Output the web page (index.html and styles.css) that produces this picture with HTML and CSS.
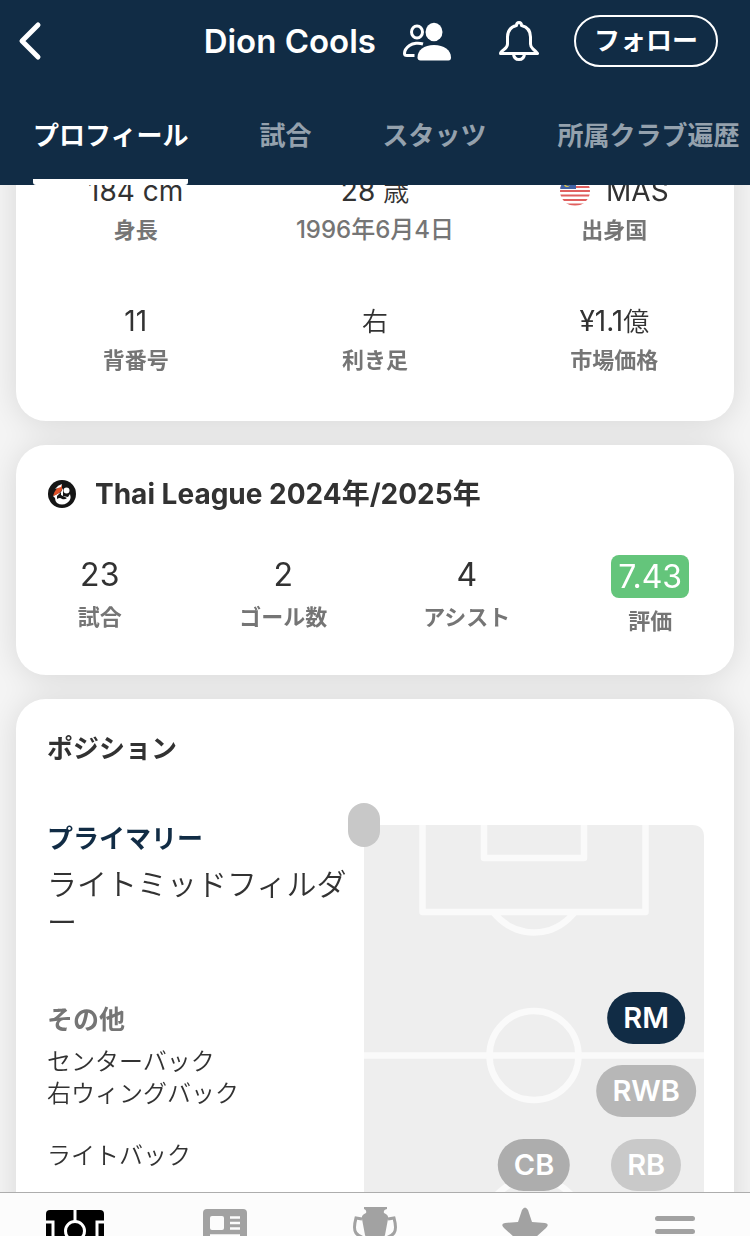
FILE: index.html
```html
<!DOCTYPE html>
<html lang="ja">
<head>
    <meta charset="UTF-8">
    <meta name="viewport" content="width=device-width, initial-scale=1.0">
    <title>Dion Cools</title>
    <link rel="stylesheet" href="styles.css">
</head>
<body>
    <header class="header">
        <div class="title-bar">
            <button type="button" class="icon-button back" aria-label="戻る">
                <svg width="24" height="40" viewBox="0 0 24 40"><path d="M20 4 4 20 20 36" fill="none" stroke="#fff" stroke-width="5" stroke-linecap="round" stroke-linejoin="round"/></svg>
            </button>
            <h1>Dion Cools</h1>
            <button type="button" class="icon-button compare" aria-label="比較">
                <svg width="48" height="40" viewBox="0 0 48 40">
                    <g fill="none" stroke="#fff" stroke-width="3">
                        <ellipse cx="14" cy="11" rx="5.5" ry="6"/>
                        <path d="M20 23C16 21.7 10 22 6.500 24.500C3 27 1.500 30 1.500 32.500Q1.500 34.500 4 34.500H11.500"/>
                    </g>
                    <ellipse cx="31" cy="11" rx="8.500" ry="9.200" fill="#fff"/>
                    <path d="M14.500 36.500C14.500 29 21 24 31 24S48 29 48 36.500Q48 39.500 45.500 39.500H17.500Q14.500 39.500 14.500 36.500Z" fill="#fff"/>
                </svg>
            </button>
            <button type="button" class="icon-button bell" aria-label="通知">
                <svg width="40" height="40" viewBox="0 0 40 40">
                    <g fill="none" stroke="#fff" stroke-width="3" stroke-linejoin="round">
                        <path d="M17.500 4.500Q17.500 1.500 20 1.500T22.500 4.500C28.500 6 31.500 10 31.500 16V23Q31.500 26 34 28T38.500 32.500H1.500Q1.500 31 5 28.500T8.500 23V16C8.500 10 11.500 6 17.500 4.500Z"/>
                        <path d="M14.500 33Q15 38.500 20 38.500T25.500 33"/>
                    </g>
                </svg>
            </button>
            <button type="button" class="follow">フォロー</button>
        </div>
        <nav class="tabs">
            <a href="#profile" class="active">プロフィール</a>
            <a href="#matches">試合</a>
            <a href="#stats">スタッツ</a>
            <a href="#career">所属クラブ遍歴</a>
        </nav>
    </header>

    <main class="content">
        <div class="cards">
            <section class="card info">
                <div class="stat">
                    <div class="value">184 cm</div>
                    <div class="label">身長</div>
                </div>
                <div class="stat">
                    <div class="value">28 <span class="unit">歳</span></div>
                    <div class="label date">1996年6月4日</div>
                </div>
                <div class="stat">
                    <div class="value country">
                        <svg width="30" height="30" viewBox="0 0 30 30">
                            <clipPath id="flag"><circle cx="15" cy="15" r="15"/></clipPath>
                            <g clip-path="url(#flag)">
                                <path fill="#fff" d="M0 0h30v30H0z"/>
                                <path stroke="#e0605f" stroke-width="2" d="M0 3h30M0 7h30M0 11h30M0 15h30M0 19.500h30M0 24h30M0 28.500h30"/>
                                <path fill="#4263a5" d="M0 0h16v13H0z"/>
                                <circle cx="7" cy="8" r="3" fill="#e9cf48"/>
                                <circle cx="8" cy="7" r="3" fill="#4263a5"/>
                            </g>
                        </svg>
                        MAS
                    </div>
                    <div class="label">出身国</div>
                </div>
                <div class="stat">
                    <div class="value">11</div>
                    <div class="label">背番号</div>
                </div>
                <div class="stat">
                    <div class="value"><span class="unit">右</span></div>
                    <div class="label">利き足</div>
                </div>
                <div class="stat">
                    <div class="value">¥1.1<span class="unit">億</span></div>
                    <div class="label">市場価格</div>
                </div>
            </section>

            <section class="card league">
                <h2>
                    <svg width="28" height="28" viewBox="0 0 28 28">
                        <circle cx="14" cy="14" r="14" fill="#151515"/>
                        <path d="M5 16L13 12L15 8V16L20 17L22 14Q24 20 19 23Q14 26 9 23Q7 21 7 18Z" fill="#fff"/>
                        <path d="M9 16L13 12V15L19 18Q17 20 14 19Q12 17 9 19Z" fill="#151515"/>
                        <circle cx="18.500" cy="10.500" r="3" fill="#fff"/>
                        <path d="M5 16Q7 8 14 5V10Q11 14 5 16Z" fill="#df5129"/>
                        <path d="M7 9Q10 5 14 4L13 7Z" fill="#fff"/>
                    </svg>
                    Thai League 2024年/2025年
                </h2>
                <div class="season">
                    <div class="stat">
                        <div class="value">23</div>
                        <div class="label">試合</div>
                    </div>
                    <div class="stat">
                        <div class="value">2</div>
                        <div class="label">ゴール数</div>
                    </div>
                    <div class="stat">
                        <div class="value">4</div>
                        <div class="label">アシスト</div>
                    </div>
                    <div class="stat">
                        <div class="value rating">7.43</div>
                        <div class="label">評価</div>
                    </div>
                </div>
            </section>

            <section class="card position">
                <h2>ポジション</h2>
                <div class="position-body">
                    <div class="position-list">
                        <h3 class="primary">プライマリー</h3>
                        <p class="main-role">ライトミッドフィルダー</p>
                        <h3>その他</h3>
                        <ul>
                            <li>センターバック</li>
                            <li>右ウィングバック</li>
                        </ul>
                        <ul>
                            <li>ライトバック</li>
                        </ul>
                    </div>
                    <div class="pitch">
                        <svg viewBox="0 0 340 461">
                            <path d="M0 0H328Q340 0 340 12V449Q340 461 328 461H0Z" fill="#eee"/>
                            <g fill="none" stroke="#fafafa" stroke-width="6.500" stroke-linejoin="round">
                                <path d="M58.500 0V87H281.500V0M120 0V33H220V0M129 87Q146 107.500 170 107.500T211 87"/>
                                <path d="M0 230.500H340"/>
                                <circle cx="170" cy="230.500" r="44.500"/>
                                <path d="M58.500 461V374H281.500V461M120 461V428H220V461M129 374Q146 353.500 170 353.500T211 374"/>
                            </g>
                        </svg>
                        <span class="badge empty"></span>
                        <span class="badge rm">RM</span>
                        <span class="badge rwb">RWB</span>
                        <span class="badge cb">CB</span>
                        <span class="badge rb">RB</span>
                    </div>
                </div>
            </section>
        </div>
    </main>

    <nav class="bottom-nav">
        <a href="#scores" aria-label="試合">
            <svg width="58" height="44" viewBox="0 0 58 44">
                <rect width="58" height="44" rx="4" fill="#000"/>
                <g fill="none" stroke="#fff" stroke-width="3">
                    <path d="M29 0V12M29 32V44M0 12H7V33H0M58 12H51V33H58"/>
                    <circle cx="29" cy="21" r="9.500"/>
                </g>
            </svg>
        </a>
        <a href="#news" aria-label="ニュース">
            <svg width="44" height="44" viewBox="0 0 44 44">
                <rect width="44" height="44" y="-1" rx="4" fill="#a2a2a2"/>
                <rect x="7" y="6" width="14" height="14" rx="2" fill="#fcfcfc"/>
                <path d="M27 7.500H37M27 13H37M27 18.500H37M7 25.500H37" stroke="#fcfcfc" stroke-width="2.500"/>
            </svg>
        </a>
        <a href="#leagues" aria-label="リーグ">
            <svg width="44" height="48" viewBox="0 0 44 48">
                <path d="M11 -3H34V-1Q30 0 31 3Q36 5 35 9L32 25Q29 32 24 34V42H20V34Q15 32 12 25L9 9Q8 5 13 3Q14 0 11 -1Z" fill="#a2a2a2"/>
                <path d="M9 9L3 8Q0 19 3 23Q6 27 12 28M35 9L41 8Q44 19 41 23Q38 27 32 28" fill="none" stroke="#a2a2a2" stroke-width="3"/>
            </svg>
        </a>
        <a href="#following" aria-label="フォロー中">
            <svg width="46" height="46" viewBox="0 0 46 46">
                <path d="M20 0Q23 -5 26 0L30 12L43 13Q48 14 44 18L34 27L37 40Q36 44 32 42L23 35L14 42Q10 44 9 40L12 27L2 18Q-2 14 3 13L16 12Z" fill="#a2a2a2"/>
            </svg>
        </a>
        <a href="#more" aria-label="その他">
            <svg width="40" height="44" viewBox="0 0 40 44">
                <path d="M2.500 8.500H37.500M2.500 21.500H37.500M2.500 34.500H37.500" stroke="#a2a2a2" stroke-width="5" stroke-linecap="round"/>
            </svg>
        </a>
    </nav>
</body>
</html>
```
FILE: styles.css
```css
:root {
    --navy: #112c45;
    --text: #323232;
    --muted: #757575;
    --background: #f5f5f5;
    --green: #64c57b;
}

* {
    box-sizing: border-box;
}

body {
    display: flex;
    flex-direction: column;
    height: 100vh;
    margin: 0;
    font-family: Inter, "Noto Sans CJK JP", sans-serif;
    color: var(--text);
    background-color: var(--background);
}

h1, h2, h3, p, ul {
    margin: 0;
    padding: 0;
}

svg {
    display: block;
    flex: none;
    overflow: visible;
}

/* Header */
.header {
    flex: none;
    background-color: var(--navy);
    color: white;
}

.title-bar {
    display: flex;
    align-items: center;
    padding: 15px 32px 0 18px;
}

h1 {
    margin-left: auto;
    font-size: 33px;
    font-weight: 600;
    line-height: 52px;
}

button {
    font-family: inherit;
    color: white;
    background: none;
    cursor: pointer;
}

.icon-button {
    padding: 0;
    border: none;
}

.compare {
    margin-left: 27px;
}

.bell {
    margin-left: 48px;
}

.follow {
    margin-left: 35px;
    padding: 0 18px;
    border: 2px solid white;
    border-radius: 26px;
    font-size: 26px;
    font-weight: 600;
    line-height: 48px;
}

.tabs {
    display: flex;
    gap: 71px;
    padding: 20px 0 0 33px;
    overflow: hidden;
    white-space: nowrap;
}

.tabs a {
    border-bottom: 6px solid transparent;
    border-radius: 3px;
    padding: 30px 0 24px;
    font-size: 26px;
    font-weight: 600;
    line-height: 38px;
    color: #94a1ad;
    text-decoration: none;
}

.tabs .active {
    color: white;
    background: linear-gradient(white, white) bottom / 100% 6px no-repeat border-box;
}

/* Cards */
.content {
    flex: 1;
    min-height: 0;
    overflow: hidden;
}

.cards {
    display: flex;
    flex-direction: column;
    gap: 24px;
    margin-top: -48px;
    padding: 0 16px;
    filter: drop-shadow(0 2px 16px rgba(0, 0, 0, 0.12));
}

.card {
    background-color: white;
    border-radius: 30px;
}

h2 {
    display: flex;
    align-items: center;
    gap: 19px;
    font-size: 26px;
    font-weight: 600;
    line-height: 36px;
}

.stat {
    text-align: center;
}

.value {
    font-size: 28px;
    line-height: 40px;
}

.unit {
    font-size: 26px;
    font-weight: 350;
    line-height: 1;
}

.label {
    color: var(--muted);
    font-size: 22px;
    font-weight: 600;
    line-height: 38px;
}

.date {
    font-size: 24px;
    font-weight: 500;
}

.info {
    display: grid;
    grid-template-columns: repeat(3, 1fr);
    row-gap: 52px;
    padding: 34px 0 42px;
}

.country {
    display: flex;
    align-items: center;
    justify-content: center;
    gap: 16px;
}

.league {
    padding: 31px 32px 35px;
}

.league h2 {
    font-size: 28px;
    font-weight: 700;
}

.season {
    display: grid;
    grid-template-columns: repeat(4, 1fr);
    gap: 80px;
    margin-top: 43px;
}

.season .stat {
    display: flex;
    flex-direction: column;
    align-items: center;
    gap: 4px;
    white-space: nowrap;
}

.season .value {
    font-size: 32px;
    line-height: 39px;
}

.season .rating {
    padding: 0 7px;
    border-radius: 8px;
    line-height: 43px;
    color: white;
    background-color: var(--green);
}

/* Position */
.position {
    padding: 32px 30px 32px 31px;
}

.position-body {
    display: flex;
    margin-top: 58px;
}

.position-list {
    flex: 1;
    padding-top: 1px;
}

h3 {
    font-size: 26px;
    font-weight: 700;
    line-height: 26px;
    color: var(--muted);
}

.primary {
    color: var(--navy);
}

.main-role {
    margin: 13px 0 66px;
    font-size: 30px;
    font-weight: 350;
    line-height: 38px;
    line-break: anywhere;
}

.position-list ul {
    margin: 13px 0 30px;
    list-style: none;
    font-size: 24px;
    font-weight: 350;
    line-height: 32px;
}

.position-list ul + ul {
    margin-top: 0;
}

.pitch {
    position: relative;
    flex: 0 0 340px;
}

.badge {
    position: absolute;
    transform: translate(-50%, -50%);
    padding: 0 16px;
    border-radius: 26px;
    font-size: 29px;
    font-weight: 600;
    line-height: 52px;
    color: white;
}

.empty {
    top: 0;
    left: 0;
    height: 44px;
    border-radius: 16px;
    background-color: #c8c8c8;
}

.rm {
    top: 193px;
    left: 83%;
    background-color: var(--navy);
}

.rwb {
    top: 266px;
    left: 83%;
    background-color: #b7b7b7;
}

.cb {
    top: 340px;
    left: 50%;
    background-color: #adadad;
}

.rb {
    top: 340px;
    left: 83%;
    background-color: #c9c9c9;
}

/* Bottom navigation */
.bottom-nav {
    display: grid;
    grid-template-columns: repeat(5, 1fr);
    flex: none;
    height: 44px;
    overflow: hidden;
    border-top: 1px solid #adadad;
    background-color: #fcfcfc;
}

.bottom-nav a {
    display: flex;
    justify-content: center;
    padding-top: 17px;
}
```
